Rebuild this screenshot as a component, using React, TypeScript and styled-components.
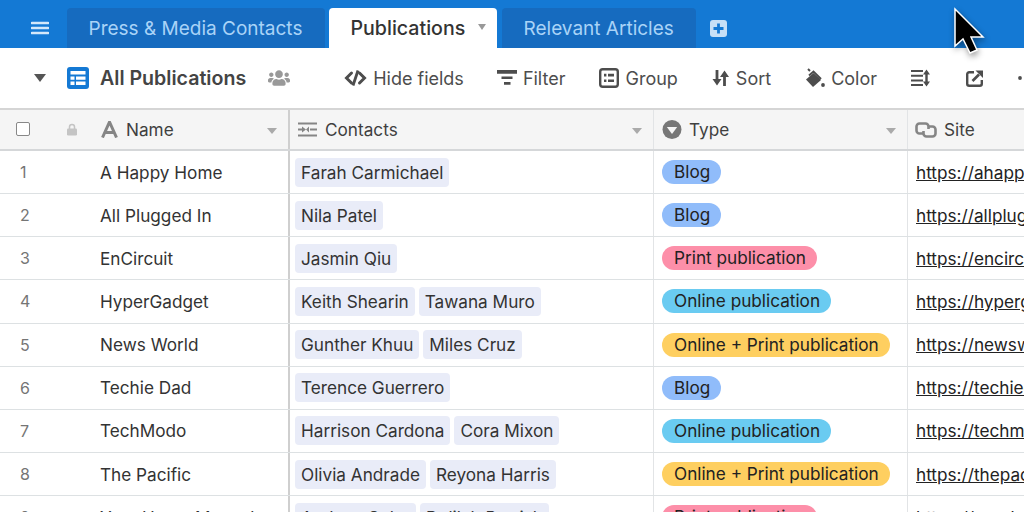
import React from "react";
import styled, { createGlobalStyle } from "styled-components";
import { FaUsers } from "react-icons/fa";

const Global = createGlobalStyle`
  html, body { margin: 0; padding: 0; background: #fff; }
  body { font-family: Inter, "Liberation Sans", sans-serif; overflow: hidden; }
`;

const Page = styled.div`
  position: relative;
  width: 1024px;
  height: 512px;
  overflow: hidden;
`;

const TabBar = styled.div`
  height: 48px;
  background: #1479d4;
  display: flex;
  align-items: flex-end;
  padding-left: 31px;
`;

const Burger = styled.div`
  width: 36px;
  height: 40px;
  display: flex;
  align-items: center;
`;

const Tab = styled.div<{ $active?: boolean; $w: number; $gap: number }>`
  width: ${(p) => p.$w}px;
  height: 40px;
  box-sizing: border-box;
  border-radius: 4px 4px 0 0;
  background: ${(p) => (p.$active ? "#fff" : "#166bbf")};
  color: ${(p) => (p.$active ? "#333" : "#a9d3f7")};
  font-size: ${(p) => (p.$active ? 19.6 : 19)}px;
  font-weight: ${(p) => (p.$active ? 500 : 400)};
  display: flex;
  align-items: center;
  padding-left: 21.5px;
  margin-right: ${(p) => p.$gap}px;
  position: relative;
`;

const TabCaret = styled.span`
  position: absolute;
  right: 11px;
  top: 16px;
  width: 0;
  height: 0;
  border-left: 4.5px solid transparent;
  border-right: 4.5px solid transparent;
  border-top: 6px solid #999;
`;

const AddBox = styled.div`
  margin: 0 0 11px 14px;
  height: 17px;
  width: 17px;
`;

const Toolbar = styled.div`
  height: 60px;
  width: 1024px;
  display: flex;
  align-items: center;
  color: #4d4d4d;
  box-sizing: border-box;
  padding-left: 34px;
  white-space: nowrap;
  overflow: hidden;

  & > *,
  & svg {
    flex-shrink: 0;
  }
`;

const ViewCaret = styled.span`
  width: 0;
  height: 0;
  border-left: 6px solid transparent;
  border-right: 6px solid transparent;
  border-top: 8px solid #555;
  margin-right: 21px;
`;

const ViewName = styled.span`
  font-size: 19.6px;
  font-weight: 600;
  margin: 0 22px 0 11px;
  color: #444;
`;

const UsersIcon = styled(FaUsers)`
  margin-right: 54px;
`;

const ToolButton = styled.div<{ $gap?: number }>`
  display: flex;
  align-items: center;
  gap: 6px;
  font-size: 18px;
  margin-right: ${(p) => p.$gap ?? 0}px;
  color: #4d4d4d;
`;

const Table = styled.div`
  width: 1024px;
`;

const Row = styled.div<{ $head?: boolean }>`
  display: grid;
  grid-template-columns: 290px 364px 254px 116px;
  height: 43.15px;
  box-sizing: border-box;
  border-bottom: 1px solid #dde1e3;
  background: ${(p) => (p.$head ? "#f5f5f5" : "#fff")};
  font-size: 17.2px;
  color: #333;
  ${(p) => p.$head && "height: 43px; border-top: 2px solid #d5d5d5; border-bottom: 2px solid #d5d7d9;"}
`;

const Cell = styled.div<{ $right?: "strong" | "soft" }>`
  display: flex;
  align-items: center;
  overflow: hidden;
  white-space: nowrap;
  box-sizing: border-box;
  border-right: ${(p) => (p.$right === "strong" ? "2px solid #cfcfcf" : p.$right === "soft" ? "1px solid #e2e4e6" : "none")};
`;

const NameCell = styled(Cell)`
  padding-left: 17px;
`;

const RowNumber = styled.span`
  width: 83px;
  padding-left: 3px;
  box-sizing: border-box;
  font-size: 16px;
  color: #757575;
`;

const CheckBox = styled.span`
  width: 14px;
  height: 14px;
  box-sizing: border-box;
  border: 1.5px solid #888;
  border-radius: 2px;
  background: #fff;
  margin-right: 36px;
  margin-top: -2px;
`;

const HeadSpacer = styled.span`
  width: 23px;
`;

const HeadLabel = styled.span`
  font-size: 17.2px;
  color: #3f3f3f;
  margin-left: 7px;
`;

const HeadCell = styled(Cell)<{ $pad: number }>`
  padding-left: ${(p) => p.$pad}px;
  position: relative;
`;

const HeadCaret = styled.span`
  position: absolute;
  right: 11px;
  top: 18px;
  width: 0;
  height: 0;
  border-left: 5px solid transparent;
  border-right: 5px solid transparent;
  border-top: 6px solid #aaa;
`;

const ContactsCell = styled(Cell)`
  padding-left: 5px;
  gap: 4px;
`;

const Contact = styled.span`
  height: 29px;
  line-height: 29px;
  padding: 0 6px;
  border-radius: 4px;
  background: #e9ecf8;
  color: #333;
`;

const TypeCell = styled(Cell)`
  padding-left: 8px;
`;

const Pill = styled.span<{ $color: string }>`
  height: 24px;
  line-height: 24px;
  padding: 0 11px 0 12px;
  border-radius: 12px;
  background: ${(p) => p.$color};
  color: #222;
`;

const SiteCell = styled(Cell)`
  padding-left: 8px;
`;

const Url = styled.span`
  color: #222;
  text-decoration: underline;
`;

const CursorArrow = styled.svg`
  position: absolute;
  left: 950px;
  top: 5px;
  filter: drop-shadow(1px 3px 3px rgba(0, 0, 0, 0.4));
`;

const PILLS: Record<string, { label: string; color: string }> = {
  blog: { label: "Blog", color: "#90bcfa" },
  print: { label: "Print publication", color: "#fd8fa9" },
  online: { label: "Online publication", color: "#6acbf1" },
  both: { label: "Online + Print publication", color: "#fecf60" },
};

const ROWS = [
  { name: "A Happy Home", contacts: ["Farah Carmichael"], type: "blog", url: "https://ahappyhome.com" },
  { name: "All Plugged In", contacts: ["Nila Patel"], type: "blog", url: "https://allplugged.com" },
  { name: "EnCircuit", contacts: ["Jasmin Qiu"], type: "print", url: "https://encircuit.com" },
  { name: "HyperGadget", contacts: ["Keith Shearin", "Tawana Muro"], type: "online", url: "https://hypergadget.com" },
  { name: "News World", contacts: ["Gunther Khuu", "Miles Cruz"], type: "both", url: "https://newsworld.com" },
  { name: "Techie Dad", contacts: ["Terence Guerrero"], type: "blog", url: "https://techiedad.com" },
  { name: "TechModo", contacts: ["Harrison Cardona", "Cora Mixon"], type: "online", url: "https://techmodo.com" },
  { name: "The Pacific", contacts: ["Olivia Andrade", "Reyona Harris"], type: "both", url: "https://thepacific.com" },
  { name: "Your Home Manual", contacts: ["Andrew Solar", "Delilah Parrish"], type: "print", url: "https://yourhome.com" },
];

const Ico = ({ w = 18, h = 18, children }: { w?: number; h?: number; children: React.ReactNode }) => (
  <svg width={w} height={h} viewBox={`0 0 ${w} ${h}`} fill="none">
    {children}
  </svg>
);

export default function App() {
  return (
    <Page>
      <Global />
      <TabBar>
        <Burger>
          <Ico w={18} h={16}>
            <path d="M1 3h16M1 8h16M1 13h16" stroke="#d4e8fa" strokeWidth="2.6" strokeLinecap="round" />
          </Ico>
        </Burger>
        <Tab $w={258} $gap={4}>Press &amp; Media Contacts</Tab>
        <Tab $active $w={168} $gap={5}>
          Publications
          <TabCaret />
        </Tab>
        <Tab $w={194} $gap={0}>Relevant Articles</Tab>
        <AddBox>
          <Ico w={17} h={17}>
            <rect width="17" height="17" rx="3" fill="#c7e0f7" />
            <path d="M8.5 3.5v10M3.5 8.5h10" stroke="#1479d4" strokeWidth="2.8" />
          </Ico>
        </AddBox>
      </TabBar>

      <Toolbar>
        <ViewCaret />
        <Ico w={22} h={22}>
          <rect width="22" height="22" rx="3" fill="#1479d4" />
          <path d="M3.5 4h15v3.6h-15zM3.5 9.4h4v3.4h-4zM9 9.4h9.5v3.4H9zM3.5 14.6h4v3.4h-4zM9 14.6h9.5v3.4H9z" fill="#fff" />
        </Ico>
        <ViewName>All Publications</ViewName>
        <UsersIcon size={22} color="#999" />
        <ToolButton $gap={33}>
          <Ico w={23} h={18}>
            <path d="M7.5 4 2.5 9l5 5M15.5 4l5 5-5 5" stroke="#4d4d4d" strokeWidth="3" strokeLinecap="round" />
            <path d="M14 1.5 9 16.5" stroke="#4d4d4d" strokeWidth="2.8" />
          </Ico>
          Hide fields
        </ToolButton>
        <ToolButton $gap={34}>
          <Ico w={20} h={18}>
            <path d="M0 1h20v3.8H0zM4.5 7.5h11V10h-11zM7 13h6.5v2.8H7z" fill="#4d4d4d" />
          </Ico>
          Filter
        </ToolButton>
        <ToolButton $gap={34}>
          <Ico w={20} h={20}>
            <rect x="1.2" y="1.2" width="17.6" height="17.6" rx="2.5" stroke="#4d4d4d" strokeWidth="2.4" />
            <path d="M5 5.8h2.4v2.6H5zM9 5.8h6v2.6H9zM5 11.4h2.4V14H5zM9 11.4h6V14H9z" fill="#4d4d4d" />
          </Ico>
          Group
        </ToolButton>
        <ToolButton $gap={33}>
          <Ico w={18} h={18}>
            <path d="M5 1v12M12.5 17V5" stroke="#4d4d4d" strokeWidth="2.8" />
            <path d="M0.5 10h9L5 16.5zM8 8h9L12.5 1.5z" fill="#4d4d4d" />
          </Ico>
          Sort
        </ToolButton>
        <ToolButton $gap={34}>
          <Ico w={21} h={20}>
            <path d="M9.5 5 2 11.5 9 19l8-7z" fill="#4d4d4d" />
            <path d="M5 7.5 9.5 3.5 17 11" stroke="#4d4d4d" strokeWidth="2" />
            <path d="M6 3 4 1" stroke="#4d4d4d" strokeWidth="2" />
            <circle cx="19" cy="17" r="1.9" fill="#4d4d4d" />
          </Ico>
          Color
        </ToolButton>
        <ToolButton $gap={36}>
          <Ico w={19} h={18}>
            <path d="M0 2h12M0 6.7h12M0 11.4h12M0 16h12" stroke="#4d4d4d" strokeWidth="2" />
            <path d="M15.5 4v10" stroke="#4d4d4d" strokeWidth="2.4" />
            <path d="M12 5.5 15.5 0.5 19 5.5zM12 12.5l3.5 5 3.5-5z" fill="#4d4d4d" />
          </Ico>
        </ToolButton>
        <ToolButton $gap={34}>
          <Ico w={17} h={17}>
            <path d="M8 2.2H3.2a2 2 0 0 0-2 2v9.6a2 2 0 0 0 2 2h10.6a2 2 0 0 0 2-2V10" stroke="#4d4d4d" strokeWidth="2.4" />
            <path d="M6.5 11 13 4.5" stroke="#4d4d4d" strokeWidth="2.6" />
            <path d="M9.5 0.5H17V8z" fill="#4d4d4d" />
          </Ico>
        </ToolButton>
        <ToolButton>
          <Ico w={6} h={6}>
            <circle cx="3" cy="3" r="1.9" fill="#4d4d4d" />
          </Ico>
        </ToolButton>
      </Toolbar>

      <Table>
        <Row $head>
          <HeadCell $pad={16} $right="strong">
            <CheckBox />
            <Ico w={12} h={13}>
              <rect x="1" y="5.5" width="10" height="7" rx="1.2" fill="#c4c4c4" />
              <path d="M3.5 6V4a2.5 2.5 0 0 1 5 0v2" stroke="#c4c4c4" strokeWidth="1.5" />
            </Ico>
            <HeadSpacer />
            <Ico w={18} h={17}>
              <path d="M1.5 16.5 8.5 1l7 15.5M4 11.5h9" stroke="#858585" strokeWidth="3" />
            </Ico>
            <HeadLabel>Name</HeadLabel>
            <HeadCaret />
          </HeadCell>
          <HeadCell $pad={7} $right="soft">
            <Ico w={21} h={17}>
              <path d="M1 2.5h19M13 8.5h7M1 14.5h19M1 8.5h5" stroke="#858585" strokeWidth="2.2" />
              <path d="M5 5.5l4 3-4 3zM12 5.5l-3 3 3 3z" fill="#858585" />
            </Ico>
            <HeadLabel>Contacts</HeadLabel>
            <HeadCaret />
          </HeadCell>
          <HeadCell $pad={8} $right="soft">
            <Ico w={20} h={19}>
              <circle cx="10" cy="9.5" r="9.5" fill="#777" />
              <path d="M4.8 7h10.4L10 14z" fill="#f5f5f5" />
            </Ico>
            <HeadLabel>Type</HeadLabel>
            <HeadCaret />
          </HeadCell>
          <HeadCell $pad={7}>
            <Ico w={22} h={16}>
              <path d="M8 11.5H4.5a3 3 0 0 1-3-3v-4a3 3 0 0 1 3-3h6a3 3 0 0 1 3 3V7" stroke="#858585" strokeWidth="2.6" />
              <path d="M14 4.5h3.5a3 3 0 0 1 3 3v4a3 3 0 0 1-3 3h-6a3 3 0 0 1-3-3V9" stroke="#858585" strokeWidth="2.6" />
            </Ico>
            <HeadLabel>Site</HeadLabel>
          </HeadCell>
        </Row>
        {ROWS.map((row, i) => (
          <Row key={row.name}>
            <NameCell $right="strong">
              <RowNumber>{i + 1}</RowNumber>
              {row.name}
            </NameCell>
            <ContactsCell $right="soft">
              {row.contacts.map((c) => (
                <Contact key={c}>{c}</Contact>
              ))}
            </ContactsCell>
            <TypeCell $right="soft">
              <Pill $color={PILLS[row.type].color}>{PILLS[row.type].label}</Pill>
            </TypeCell>
            <SiteCell>
              <Url>{row.url}</Url>
            </SiteCell>
          </Row>
        ))}
      </Table>

      <CursorArrow width="40" height="56" viewBox="0 0 40 56">
        <path d="M5 4V41L13 34 20 48 27 45 21 32H33Z" fill="#000" stroke="#fff" strokeWidth="1.5" />
      </CursorArrow>
    </Page>
  );
}
